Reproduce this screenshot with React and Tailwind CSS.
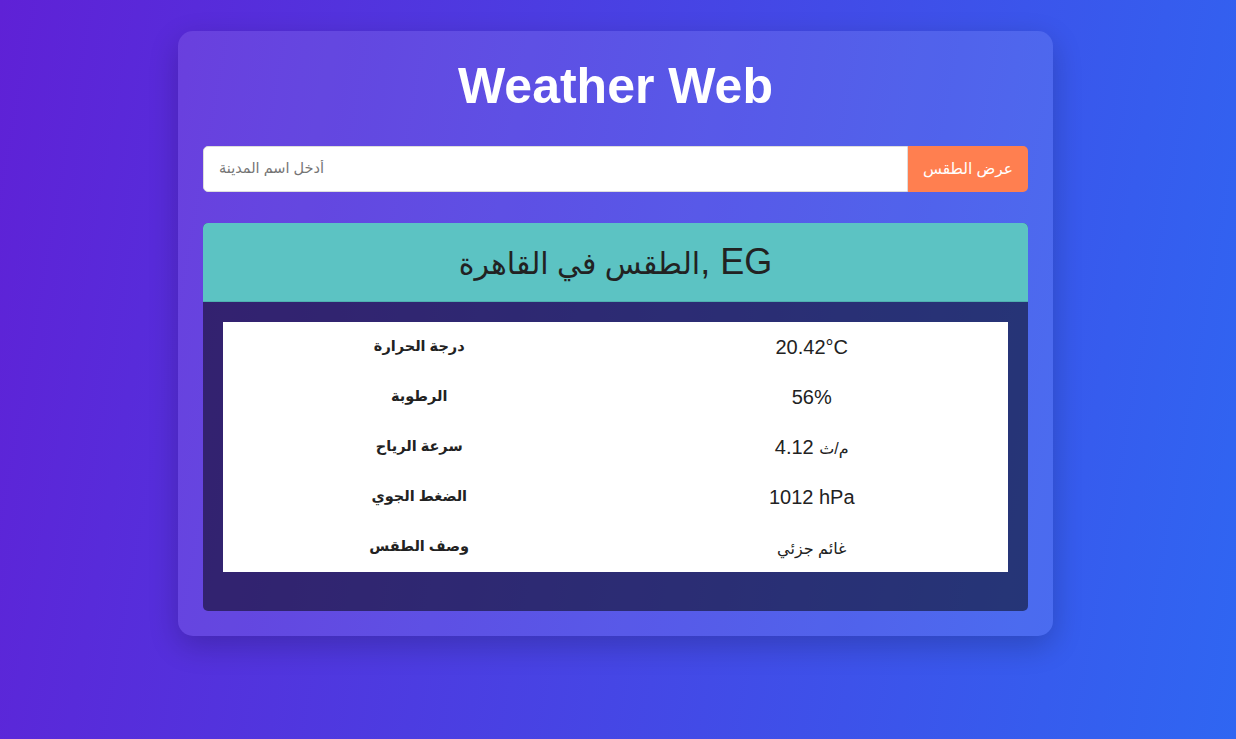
const rows = [
  ["درجة الحرارة", <span>20.42°C</span>],
  ["الرطوبة", <span>56%</span>],
  ["سرعة الرياح", <span>4.12 <span className="text-[16px]">م/ث</span></span>],
  ["الضغط الجوي", <span>1012 hPa</span>],
  ["وصف الطقس", <span className="text-[16px]">غائم جزئي</span>],
];

export default function App() {
  return (
    <div className="min-h-screen bg-[linear-gradient(100deg,#5f21d6,#2f66f2)] pt-[31px] pr-[5px] font-['Liberation_Sans','DejaVu_Sans',sans-serif]">
      <div className="mx-auto w-[875px] rounded-[15px] bg-white/10 p-[25px] shadow-[0_10px_30px_rgba(0,0,0,0.2)]">
        <h1 className="mt-[2px] mb-[30px] text-center text-[50px] font-bold leading-[1.15] text-white">
          Weather Web
        </h1>

        <div className="flex h-[46px]">
          <input
            type="text"
            placeholder="أدخل اسم المدينة"
            className="flex-1 rounded-l-[5px] border border-[#ddd] bg-white px-[15px] text-[14.5px] text-[#333] placeholder:text-[#757575] outline-none"
          />
          <button className="w-[120px] rounded-r-[5px] bg-[#ff7f50] text-[15.5px] text-white">
            عرض الطقس
          </button>
        </div>

        <div className="mt-[31px] overflow-hidden rounded-[5px] bg-black/50">
          <div className="flex h-[79px] items-center justify-center border-b border-[#4fb0b0] bg-[#5cc3c3]">
            <h2 className="text-[36px] leading-none text-[#222]">
              <span className="text-[30px]">الطقس في القاهرة</span>, EG
            </h2>
          </div>
          <div className="px-[20px] pt-[20px] pb-[39px]">
            <table className="w-full table-fixed bg-white text-[#222]">
              <tbody>
                {rows.map(([label, value]) => (
                  <tr key={label} className="h-[50px]">
                    <th className="text-center text-[14.5px] font-bold">{label}</th>
                    <td className="text-center text-[20px]">{value}</td>
                  </tr>
                ))}
              </tbody>
            </table>
          </div>
        </div>
      </div>
    </div>
  );
}
